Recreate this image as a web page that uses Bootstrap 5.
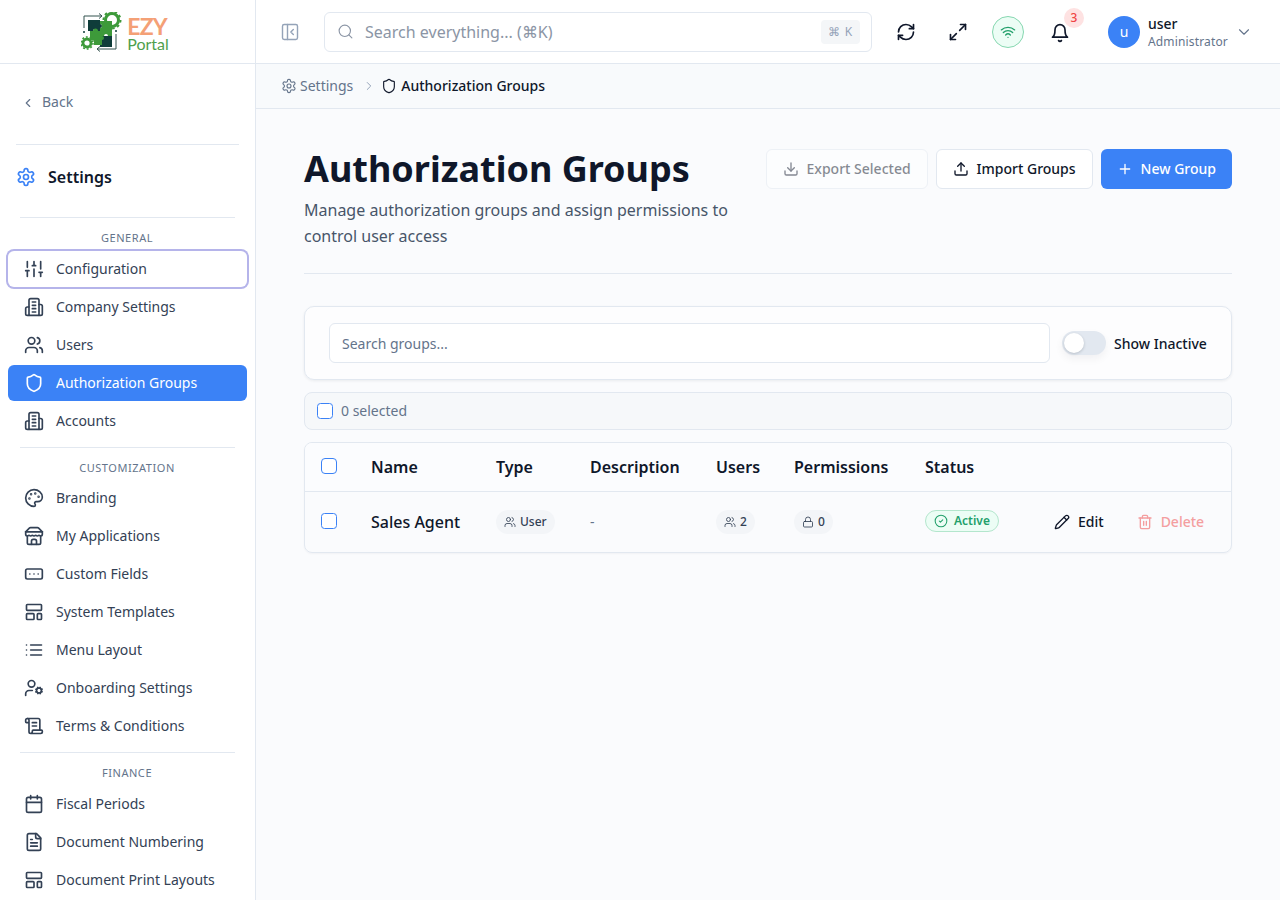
<!DOCTYPE html>
<html lang="en">
<head>
    <meta charset="UTF-8">
    <title>Authorization Groups</title>
    <link rel="stylesheet" href="https://cdn.jsdelivr.net/npm/bootstrap@5.3.0/dist/css/bootstrap.min.css">
    <style>
        html, body { height: 100%; }
        body {
            font-family: "Noto Sans", "Liberation Sans", sans-serif;
            background: #fafbfd;
            color: #0f172a;
            font-size: 14px;
            line-height: 20px;
            overflow: hidden;
        }
        .ico {
            width: 20px; height: 20px; flex: none;
            fill: none; stroke: currentColor; stroke-width: 2;
            stroke-linecap: round; stroke-linejoin: round;
        }
        .app-shell { height: 900px; }

        /* sidebar */
        .side-col { width: 256px; flex: none; background: #fff; border-right: 1px solid #e2e8f0; overflow: hidden; height: 900px; }
        .logo-bar { height: 64px; border-bottom: 1px solid #e2e8f0; padding-right: 5px; }
        .logo-svg { width: 42px; height: 40px; margin-top: 1px; }
        .logo-words { font-family: "Lato", sans-serif; margin-left: 4px; margin-top: 6px; }
        .logo-ezy { color: #f4a076; font-weight: 700; font-size: 23px; letter-spacing: -.8px; line-height: 18px; }
        .logo-portal { color: #4f9f4c; font-size: 16px; line-height: 17px; }
        .back-row { color: #64748b; padding: 28px 0 0 24px; height: 60px; }
        .back-row .ico { width: 14px; height: 14px; margin-left: -3px; margin-right: 7px; }
        .side-rule { border-top: 1px solid #e2e8f0; }
        .rule-a { margin: 20px 16px 0 16px; }
        .rule-b { margin: 0 20px 0 20px; }
        .settings-title { height: 72px; padding: 0 0 8px 16px; font-size: 16px; font-weight: 600; color: #0f172a; }
        .settings-title .ico { color: #3b82f6; margin-right: 12px; }
        .group-label { font-size: 11px; color: #64748b; letter-spacing: .55px; text-align: center; height: 16px; line-height: 16px; margin: 12px 0 5px; padding-right: 1px; }
        .group-label.is-tight { margin-bottom: 4px; }
        .side-nav { padding: 0 8px 0 8px; }
        .side-link {
            height: 36px; margin-bottom: 2px; padding: 0 0 0 16px; width: 239px;
            color: #334155; border-radius: 6px; display: flex; align-items: center;
        }
        .side-link .ico { margin-right: 12px; }
        .side-link.is-focus { box-shadow: 0 0 0 2px #b5b4ea; }
        .side-link.active, .side-link.active:hover { background: #3b82f6; color: #fff; }

        /* top bar */
        .top-bar { height: 64px; background: #fff; border-bottom: 1px solid #e2e8f0; padding-left: 24px; }
        .panel-btn { color: #94a3b8; margin-right: 24px; }
        .panel-btn .ico { stroke-width: 1.7; }
        .global-search { width: 548px; height: 40px; border: 1px solid #e2e8f0; border-radius: 6px; padding: 0 11px 0 12px; color: #8b95a5; font-size: 16px; }
        .global-search .ico { width: 17px; height: 17px; margin-right: 11px; stroke-width: 1.6; }
        .key-hint { background: #f4f6f8; color: #94a3b8; font-size: 12px; width: 39px; height: 24px; border-radius: 4px; letter-spacing: 1px; }
        .tool-icon { color: #0f172a; }
        .tool-refresh { margin-left: 24px; }
        .tool-expand { margin-left: 32px; }
        .wifi-dot { width: 32px; height: 32px; border-radius: 50%; background: #ecfdf5; border: 1px solid #86d7b0; color: #22a06b; margin-left: 24px; }
        .wifi-dot .ico { width: 16px; height: 16px; }
        .bell-wrap { margin-left: 26px; width: 20px; height: 20px; }
        .bell-count { position: absolute; top: -14px; left: 14px; width: 20px; height: 20px; border-radius: 50%; background: #fee2e2; color: #ef4444; font-size: 12px; font-weight: 500; }
        .user-avatar { width: 32px; height: 32px; border-radius: 50%; background: #3b82f6; color: #fff; margin-left: 38px; font-size: 14px; }
        .user-name { margin: 2px 0 0 8px; line-height: 18px; }
        .user-name div:first-child { font-weight: 500; }
        .user-name div:last-child { color: #64748b; font-size: 12px; letter-spacing: .15px; }
        .user-caret { width: 18px; height: 18px; color: #64748b; margin-left: 7px; stroke-width: 1.5; }

        /* breadcrumb */
        .crumb-bar { height: 45px; background: #f8fafc; border-bottom: 1px solid #e2e8f0; padding-left: 25px; color: #64748b; }
        .crumb-bar .ico { width: 16px; height: 16px; stroke-width: 1.7; }
        .crumb-gear { margin-right: 3px; }
        .crumb-sep { margin: 0 5px 0 9px; }
        .crumb-sep .ico { width: 14px; height: 14px; color: #94a3b8; }
        .crumb-now { color: #0f172a; font-weight: 500; }

        /* page */
        .page-body { padding: 40px 48px 0; }
        .page-head { height: 125px; border-bottom: 1px solid #e2e8f0; }
        .page-title { font-size: 36px; font-weight: 700; line-height: 40px; margin: 0; color: #0f172a; }
        .page-sub { font-size: 16px; line-height: 26px; color: #475569; width: 450px; margin: 8px 0 0; }
        .head-btn { height: 40px; font-size: 14px; line-height: 20px; font-weight: 500; border-radius: 6px; display: flex; align-items: center; gap: 8px; padding: 0 16px; border: 1px solid #e2e8f0; background: #fff; color: #0f172a; }
        .head-btn .ico { width: 16px; height: 16px; }
        .head-btn.is-off { color: #0f172a; opacity: .5; }
        .head-btn.is-main { background: #3b82f6; border: 0; color: #fff; }
        .filter-card { margin-top: 32px; height: 74px; border: 1px solid #e2e8f0; border-radius: 10px; background: rgba(255, 255, 255, .5); box-shadow: 0 1px 3px rgba(15, 23, 42, .07); padding: 0 24px; }
        .filter-input { height: 40px; width: 721px; font-size: 14px; border-color: #e2e8f0; border-radius: 6px; background: #fff; padding: 0 12px; color: #64748b; }
        .filter-input::placeholder { color: #64748b; }
        .toggle-track { width: 44px; height: 24px; border-radius: 12px; background: #e2e8f0; margin: 0 8px 0 12px; position: relative; box-shadow: 0 4px 8px rgba(15, 23, 42, .05); }
        .toggle-track::after { content: ""; position: absolute; top: 2px; left: 2px; width: 20px; height: 20px; border-radius: 50%; background: #fff; box-shadow: 0 1px 3px rgba(15, 23, 42, .2); }
        .toggle-text { font-weight: 500; padding-top: 2px; }
        .tick-box { width: 16px; height: 16px; margin: 0; border: 1px solid #3b82f6; border-radius: 4px; background-color: #fff; display: block; }
        .select-bar { margin-top: 12px; height: 38px; border: 1px solid #e2e8f0; border-radius: 8px; background: #f6f8fa; padding-left: 12px; color: #64748b; gap: 8px; }
        .group-card { margin-top: 12px; border: 1px solid #e2e8f0; border-radius: 8px; overflow: hidden; box-shadow: 0 1px 2px rgba(15, 23, 42, .04); }
        .group-table { width: 926px; table-layout: fixed; margin: 0; --bs-table-bg: transparent; }
        .group-table th, .group-table td { padding: 0 16px; vertical-align: middle; border-color: #e2e8f0; white-space: nowrap; }
        .group-table thead th { height: 48px; font-size: 16px; font-weight: 600; color: #0f172a; background: #fbfcfe; }
        .group-table .tick-box { margin-top: -2px; }
        .group-table tbody td { height: 61px; border-bottom: 0; font-size: 14px; color: #0f172a; }
        .col-tick { width: 50px; }
        .col-name { width: 125px; }
        .col-type { width: 94px; }
        .col-desc { width: 126px; }
        .col-users { width: 78px; }
        .col-perm { width: 131px; }
        .col-status { width: 115px; }
        .group-table .name-cell { font-size: 16px; font-weight: 500; }
        .group-table .dash-cell { color: #64748b; }
        .group-table .action-cell { padding-left: 30px; }
        .soft-chip { display: inline-flex; align-items: center; gap: 4px; height: 24px; padding: 0 8px; border-radius: 12px; background: #f3f5f8; font-size: 12px; font-weight: 500; color: #334155; }
        .soft-chip .ico { width: 12px; height: 12px; stroke-width: 1.7; }
        .active-chip { display: inline-flex; align-items: center; gap: 6px; height: 22px; padding: 0 8px; border-radius: 11px; background: #ecfdf5; border: 1px solid #b3e6cd; color: #22a06b; font-size: 12px; font-weight: 600; }
        .active-chip .ico { width: 14px; height: 14px; stroke-width: 1.8; }
        .row-action { display: inline-flex; align-items: center; gap: 8px; font-weight: 500; color: #0f172a; vertical-align: middle; }
        .row-action .ico { width: 16px; height: 16px; }
        .row-action.is-danger { color: #ef4444; opacity: .5; margin-left: 33px; }
    </style>
</head>
<body>
<svg width="0" height="0" class="position-absolute">
    <symbol id="i-gear" viewBox="0 0 24 24"><path d="M12.22 2h-.44a2 2 0 0 0-2 2v.18a2 2 0 0 1-1 1.73l-.43.25a2 2 0 0 1-2 0l-.15-.08a2 2 0 0 0-2.73.73l-.22.38a2 2 0 0 0 .73 2.73l.15.1a2 2 0 0 1 1 1.72v.51a2 2 0 0 1-1 1.74l-.15.09a2 2 0 0 0-.73 2.73l.22.38a2 2 0 0 0 2.73.73l.15-.08a2 2 0 0 1 2 0l.43.25a2 2 0 0 1 1 1.73V20a2 2 0 0 0 2 2h.44a2 2 0 0 0 2-2v-.18a2 2 0 0 1 1-1.73l.43-.25a2 2 0 0 1 2 0l.15.08a2 2 0 0 0 2.73-.73l.22-.39a2 2 0 0 0-.73-2.73l-.15-.08a2 2 0 0 1-1-1.74v-.5a2 2 0 0 1 1-1.74l.15-.09a2 2 0 0 0 .73-2.73l-.22-.38a2 2 0 0 0-2.73-.73l-.15.08a2 2 0 0 1-2 0l-.43-.25a2 2 0 0 1-1-1.73V4a2 2 0 0 0-2-2z"/><circle cx="12" cy="12" r="3"/></symbol>
    <symbol id="i-shield" viewBox="0 0 24 24"><path d="M20 13c0 5-3.5 7.5-7.66 8.95a1 1 0 0 1-.67-.01C7.5 20.5 4 18 4 13V6a1 1 0 0 1 1-1c2 0 4.5-1.2 6.24-2.72a1.17 1.17 0 0 1 1.52 0C14.51 3.81 17 5 19 5a1 1 0 0 1 1 1z"/></symbol>
    <symbol id="i-sliders" viewBox="0 0 24 24"><path d="M4 21v-7M4 10V3M12 21v-9M12 8V3M20 21v-5M20 12V3M2 14h4M10 8h4M18 16h4"/></symbol>
    <symbol id="i-building" viewBox="0 0 24 24"><path d="M6 22V4a2 2 0 0 1 2-2h8a2 2 0 0 1 2 2v18Z"/><path d="M6 12H4a2 2 0 0 0-2 2v6a2 2 0 0 0 2 2h2"/><path d="M18 9h2a2 2 0 0 1 2 2v9a2 2 0 0 1-2 2h-2"/><path d="M10 6h4M10 10h4M10 14h4M10 18h4"/></symbol>
    <symbol id="i-users" viewBox="0 0 24 24"><path d="M16 21v-2a4 4 0 0 0-4-4H6a4 4 0 0 0-4 4v2"/><circle cx="9" cy="7" r="4"/><path d="M22 21v-2a4 4 0 0 0-3-3.87"/><path d="M16 3.13a4 4 0 0 1 0 7.75"/></symbol>
    <symbol id="i-palette" viewBox="0 0 24 24"><circle cx="13.5" cy="6.5" r=".5" fill="currentColor"/><circle cx="17.5" cy="10.5" r=".5" fill="currentColor"/><circle cx="8.5" cy="7.5" r=".5" fill="currentColor"/><circle cx="6.5" cy="12.5" r=".5" fill="currentColor"/><path d="M12 2C6.5 2 2 6.5 2 12s4.5 10 10 10c.926 0 1.648-.746 1.648-1.688 0-.437-.18-.835-.437-1.125-.29-.289-.438-.652-.438-1.125a1.64 1.64 0 0 1 1.668-1.668h1.996c3.051 0 5.555-2.503 5.555-5.554C21.965 6.012 17.461 2 12 2z"/></symbol>
    <symbol id="i-store" viewBox="0 0 24 24"><path d="m2 7 4.41-4.41A2 2 0 0 1 7.83 2h8.34a2 2 0 0 1 1.42.59L22 7"/><path d="M4 12v8a2 2 0 0 0 2 2h12a2 2 0 0 0 2-2v-8"/><path d="M15 22v-4a2 2 0 0 0-2-2h-2a2 2 0 0 0-2 2v4"/><path d="M2 7h20"/><path d="M22 7v3a2 2 0 0 1-2 2a2.7 2.7 0 0 1-1.59-.63.7.7 0 0 0-.82 0A2.7 2.7 0 0 1 16 12a2.7 2.7 0 0 1-1.59-.63.7.7 0 0 0-.82 0A2.7 2.7 0 0 1 12 12a2.7 2.7 0 0 1-1.59-.63.7.7 0 0 0-.82 0A2.7 2.7 0 0 1 8 12a2.7 2.7 0 0 1-1.59-.63.7.7 0 0 0-.82 0A2.7 2.7 0 0 1 4 12a2 2 0 0 1-2-2V7"/></symbol>
    <symbol id="i-field" viewBox="0 0 24 24"><rect width="20" height="12" x="2" y="6" rx="2"/><path d="M12 12h.01M17 12h.01M7 12h.01"/></symbol>
    <symbol id="i-template" viewBox="0 0 24 24"><rect width="18" height="7" x="3" y="3" rx="1"/><rect width="9" height="7" x="3" y="14" rx="1"/><rect width="5" height="7" x="16" y="14" rx="1"/></symbol>
    <symbol id="i-list" viewBox="0 0 24 24"><path d="M3 12h.01M3 18h.01M3 6h.01M8 12h13M8 18h13M8 6h13"/></symbol>
    <symbol id="i-usercog" viewBox="0 0 24 24"><circle cx="18" cy="15" r="3"/><circle cx="9" cy="7" r="4"/><path d="M10 15H6a4 4 0 0 0-4 4v2"/><path d="m21.7 16.4-.9-.3M15.2 13.9l-.9-.3M16.6 18.7l.3-.9M19.1 12.2l.3-.9M19.6 18.7l-.4-1M16.8 12.3l-.4-1M14.3 16.6l1-.4M20.7 13.8l1-.4"/></symbol>
    <symbol id="i-scroll" viewBox="0 0 24 24"><path d="M15 12h-5M15 8h-5"/><path d="M19 17V5a2 2 0 0 0-2-2H4"/><path d="M8 21h12a2 2 0 0 0 2-2v-1a1 1 0 0 0-1-1H11a1 1 0 0 0-1 1v1a2 2 0 1 1-4 0V5a2 2 0 1 0-4 0v2a1 1 0 0 0 1 1h3"/></symbol>
    <symbol id="i-calendar" viewBox="0 0 24 24"><path d="M8 2v4M16 2v4"/><rect width="18" height="18" x="3" y="4" rx="2"/><path d="M3 10h18"/></symbol>
    <symbol id="i-file" viewBox="0 0 24 24"><path d="M15 2H6a2 2 0 0 0-2 2v16a2 2 0 0 0 2 2h12a2 2 0 0 0 2-2V7Z"/><path d="M14 2v4a2 2 0 0 0 2 2h4"/><path d="M10 9H8M16 13H8M16 17H8"/></symbol>
    <symbol id="i-panel" viewBox="0 0 24 24"><rect width="18" height="18" x="3" y="3" rx="2"/><path d="M9 3v18"/><path d="m16 15-3-3 3-3"/></symbol>
    <symbol id="i-search" viewBox="0 0 24 24"><circle cx="11" cy="11" r="8"/><path d="m21 21-4.3-4.3"/></symbol>
    <symbol id="i-refresh" viewBox="0 0 24 24"><path d="M3 12a9 9 0 0 1 9-9 9.75 9.75 0 0 1 6.74 2.74L21 8"/><path d="M21 3v5h-5"/><path d="M21 12a9 9 0 0 1-9 9 9.75 9.75 0 0 1-6.74-2.74L3 16"/><path d="M8 16H3v5"/></symbol>
    <symbol id="i-expand" viewBox="0 0 24 24"><path d="M15 3h6v6"/><path d="m21 3-7 7"/><path d="m3 21 7-7"/><path d="M9 21H3v-6"/></symbol>
    <symbol id="i-wifi" viewBox="0 0 24 24"><path d="M12 20h.01"/><path d="M2 8.82a15 15 0 0 1 20 0"/><path d="M5 12.859a10 10 0 0 1 14 0"/><path d="M8.5 16.429a5 5 0 0 1 7 0"/></symbol>
    <symbol id="i-bell" viewBox="0 0 24 24"><path d="M6 8a6 6 0 0 1 12 0c0 7 3 9 3 9H3s3-2 3-9"/><path d="M10.3 21a1.94 1.94 0 0 0 3.4 0"/></symbol>
    <symbol id="i-down" viewBox="0 0 24 24"><path d="m6 9 6 6 6-6"/></symbol>
    <symbol id="i-left" viewBox="0 0 24 24"><path d="m15 18-6-6 6-6"/></symbol>
    <symbol id="i-right" viewBox="0 0 24 24"><path d="m9 18 6-6-6-6"/></symbol>
    <symbol id="i-download" viewBox="0 0 24 24"><path d="M21 15v4a2 2 0 0 1-2 2H5a2 2 0 0 1-2-2v-4"/><path d="m7 10 5 5 5-5"/><path d="M12 15V3"/></symbol>
    <symbol id="i-upload" viewBox="0 0 24 24"><path d="M21 15v4a2 2 0 0 1-2 2H5a2 2 0 0 1-2-2v-4"/><path d="m17 8-5-5-5 5"/><path d="M12 3v12"/></symbol>
    <symbol id="i-plus" viewBox="0 0 24 24"><path d="M5 12h14M12 5v14"/></symbol>
    <symbol id="i-lock" viewBox="0 0 24 24"><rect width="18" height="11" x="3" y="11" rx="2"/><path d="M7 11V7a5 5 0 0 1 10 0v4"/></symbol>
    <symbol id="i-check" viewBox="0 0 24 24"><circle cx="12" cy="12" r="10"/><path d="m9 12 2 2 4-4"/></symbol>
    <symbol id="i-pencil" viewBox="0 0 24 24"><path d="M21.174 6.812a1 1 0 0 0-3.986-3.987L3.842 16.174a2 2 0 0 0-.5.83l-1.321 4.352a.5.5 0 0 0 .623.622l4.353-1.32a2 2 0 0 0 .83-.497z"/><path d="m15 5 4 4"/></symbol>
    <symbol id="i-trash" viewBox="0 0 24 24"><path d="M3 6h18"/><path d="M19 6v14c0 1-1 2-2 2H7c-1 0-2-1-2-2V6"/><path d="M8 6V4c0-1 1-2 2-2h4c1 0 2 1 2 2v2"/><path d="M10 11v6M14 11v6"/></symbol>
</svg>

<div class="app-shell d-flex">
    <aside class="side-col">
        <div class="logo-bar d-flex justify-content-center align-items-center">
            <svg class="logo-svg" viewBox="0 0 42 40">
                <!-- frame arrows -->
                <path d="M3 16V4h18M18 1.500l3 2.500-3 2.500M35 22v15H16M19 34.500l-3 2.500 3 2.500" fill="none" stroke="#33524e" stroke-width="1"/>
                <circle cx="3" cy="20" r="1" fill="#0f3d3a"/>
                <circle cx="35" cy="19" r="1" fill="#0f3d3a"/>
                <!-- big gear -->
                <circle cx="31" cy="8" r="6.500" fill="none" stroke="#3d9a3a" stroke-width="3"/>
                <circle cx="31" cy="8" r="8.500" fill="none" stroke="#3d9a3a" stroke-width="2" stroke-dasharray="2.600 2.700"/>
                <!-- puzzle pieces -->
                <path d="M7 8h12v4a2 2 0 0 1 0 4v3h-3a2 2 0 0 0-4 0H7z" fill="#0f3d3a"/>
                <path d="M19 24h12v11H19v-3a2 2 0 0 0 0-4z" fill="#0f3d3a"/>
                <path d="M19 9h12v15h-4a2 2 0 0 0-4 0h-4v-8a2 2 0 0 0 0-4z" fill="#3d9a3a"/>
                <path d="M9 19h3a2.500 2.500 0 0 1 5 0h4v5a2 2 0 0 1 0 4v5H13v-3a2 2 0 0 0-4 0z" fill="#3d9a3a"/>
                <!-- small gear -->
                <circle cx="6" cy="31" r="4" fill="#fff" stroke="#3d9a3a" stroke-width="2.800"/>
                <circle cx="6" cy="31" r="6" fill="none" stroke="#3d9a3a" stroke-width="1.500" stroke-dasharray="1.900 1.870"/>
            </svg>
            <div class="logo-words">
                <div class="logo-ezy">EZY</div>
                <div class="logo-portal">Portal</div>
            </div>
        </div>
        <div class="back-row d-flex align-items-start">
            <svg class="ico mt-1"><use href="#i-left"/></svg><span>Back</span>
        </div>
        <div class="side-rule rule-a"></div>
        <div class="settings-title d-flex align-items-center">
            <svg class="ico"><use href="#i-gear"/></svg>Settings
        </div>
        <div class="side-rule rule-b"></div>
        <div class="group-label">GENERAL</div>
        <nav class="side-nav">
            <a class="side-link text-decoration-none is-focus" href="#"><svg class="ico"><use href="#i-sliders"/></svg>Configuration</a>
            <a class="side-link text-decoration-none" href="#"><svg class="ico"><use href="#i-building"/></svg>Company Settings</a>
            <a class="side-link text-decoration-none" href="#"><svg class="ico"><use href="#i-users"/></svg>Users</a>
            <a class="side-link text-decoration-none active" href="#"><svg class="ico"><use href="#i-shield"/></svg>Authorization Groups</a>
            <a class="side-link text-decoration-none" href="#"><svg class="ico"><use href="#i-building"/></svg>Accounts</a>
        </nav>
        <div class="side-rule rule-b mt-2"></div>
        <div class="group-label is-tight">CUSTOMIZATION</div>
        <nav class="side-nav">
            <a class="side-link text-decoration-none" href="#"><svg class="ico"><use href="#i-palette"/></svg>Branding</a>
            <a class="side-link text-decoration-none" href="#"><svg class="ico"><use href="#i-store"/></svg>My Applications</a>
            <a class="side-link text-decoration-none" href="#"><svg class="ico"><use href="#i-field"/></svg>Custom Fields</a>
            <a class="side-link text-decoration-none" href="#"><svg class="ico"><use href="#i-template"/></svg>System Templates</a>
            <a class="side-link text-decoration-none" href="#"><svg class="ico"><use href="#i-list"/></svg>Menu Layout</a>
            <a class="side-link text-decoration-none" href="#"><svg class="ico"><use href="#i-usercog"/></svg>Onboarding Settings</a>
            <a class="side-link text-decoration-none" href="#"><svg class="ico"><use href="#i-scroll"/></svg>Terms &amp; Conditions</a>
        </nav>
        <div class="side-rule rule-b mt-2"></div>
        <div class="group-label">FINANCE</div>
        <nav class="side-nav">
            <a class="side-link text-decoration-none" href="#"><svg class="ico"><use href="#i-calendar"/></svg>Fiscal Periods</a>
            <a class="side-link text-decoration-none" href="#"><svg class="ico"><use href="#i-file"/></svg>Document Numbering</a>
            <a class="side-link text-decoration-none" href="#"><svg class="ico"><use href="#i-template"/></svg>Document Print Layouts</a>
        </nav>
    </aside>

    <div class="flex-grow-1">
        <header class="top-bar d-flex align-items-center">
            <div class="panel-btn d-flex"><svg class="ico"><use href="#i-panel"/></svg></div>
            <div class="global-search d-flex align-items-center">
                <svg class="ico"><use href="#i-search"/></svg>
                <span class="flex-grow-1">Search everything... (⌘K)</span>
                <span class="key-hint d-flex align-items-center justify-content-center">⌘ K</span>
            </div>
            <svg class="ico tool-icon tool-refresh"><use href="#i-refresh"/></svg>
            <svg class="ico tool-icon tool-expand"><use href="#i-expand"/></svg>
            <div class="wifi-dot d-flex align-items-center justify-content-center"><svg class="ico"><use href="#i-wifi"/></svg></div>
            <div class="bell-wrap position-relative">
                <svg class="ico tool-icon"><use href="#i-bell"/></svg>
                <span class="bell-count d-flex align-items-center justify-content-center">3</span>
            </div>
            <div class="user-avatar d-flex align-items-center justify-content-center">u</div>
            <div class="user-name"><div>user</div><div>Administrator</div></div>
            <svg class="ico user-caret"><use href="#i-down"/></svg>
        </header>

        <div class="crumb-bar d-flex align-items-center">
            <svg class="ico crumb-gear"><use href="#i-gear"/></svg><span>Settings</span>
            <span class="crumb-sep d-flex"><svg class="ico"><use href="#i-right"/></svg></span>
            <svg class="ico crumb-now me-1"><use href="#i-shield"/></svg><span class="crumb-now">Authorization Groups</span>
        </div>

        <main class="page-body">
            <div class="page-head d-flex justify-content-between align-items-start">
                <div>
                    <h1 class="page-title">Authorization Groups</h1>
                    <p class="page-sub">Manage authorization groups and assign permissions to control user access</p>
                </div>
                <div class="d-flex gap-2">
                    <button class="head-btn is-off" type="button"><svg class="ico"><use href="#i-download"/></svg>Export Selected</button>
                    <button class="head-btn" type="button"><svg class="ico"><use href="#i-upload"/></svg>Import Groups</button>
                    <button class="head-btn is-main" type="button"><svg class="ico"><use href="#i-plus"/></svg>New Group</button>
                </div>
            </div>

            <div class="filter-card d-flex align-items-center">
                <input class="form-control filter-input" type="text" placeholder="Search groups...">
                <span class="toggle-track"></span>
                <span class="toggle-text">Show Inactive</span>
            </div>

            <div class="select-bar d-flex align-items-center">
                <input class="form-check-input tick-box" type="checkbox">
                <span>0 selected</span>
            </div>

            <div class="group-card">
                <table class="table group-table">
                    <thead>
                    <tr>
                        <th class="col-tick"><input class="form-check-input tick-box" type="checkbox"></th>
                        <th class="col-name">Name</th>
                        <th class="col-type">Type</th>
                        <th class="col-desc">Description</th>
                        <th class="col-users">Users</th>
                        <th class="col-perm">Permissions</th>
                        <th class="col-status">Status</th>
                        <th></th>
                    </tr>
                    </thead>
                    <tbody>
                    <tr>
                        <td><input class="form-check-input tick-box" type="checkbox"></td>
                        <td class="name-cell">Sales Agent</td>
                        <td><span class="soft-chip"><svg class="ico"><use href="#i-users"/></svg>User</span></td>
                        <td class="dash-cell">-</td>
                        <td><span class="soft-chip"><svg class="ico"><use href="#i-users"/></svg>2</span></td>
                        <td><span class="soft-chip"><svg class="ico"><use href="#i-lock"/></svg>0</span></td>
                        <td><span class="active-chip"><svg class="ico"><use href="#i-check"/></svg>Active</span></td>
                        <td class="action-cell">
                            <span class="row-action"><svg class="ico"><use href="#i-pencil"/></svg>Edit</span><span class="row-action is-danger"><svg class="ico"><use href="#i-trash"/></svg>Delete</span>
                        </td>
                    </tr>
                    </tbody>
                </table>
            </div>
        </main>
    </div>
</div>
</body>
</html>
